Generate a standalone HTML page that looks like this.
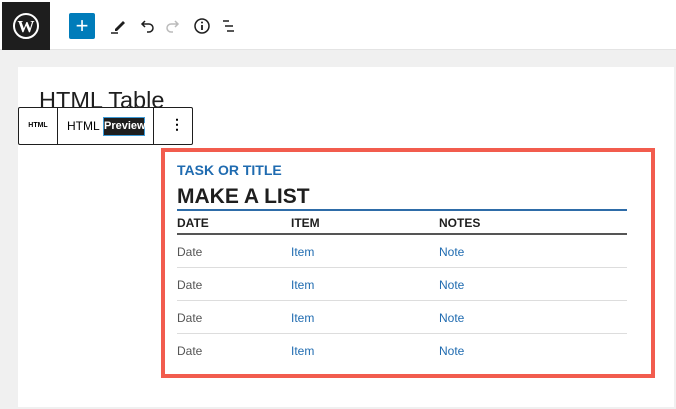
<!DOCTYPE html>
<html><head><style>
*{margin:0;padding:0;box-sizing:border-box}
body{width:676px;height:409px;background:#f0f0f0;font-family:"Liberation Sans",Arial,sans-serif;position:relative;overflow:hidden}
.top{position:absolute;left:0;top:0;width:676px;height:50px;background:#fff;border-bottom:1px solid #e4e4e4}
.wp{position:absolute;left:2px;top:2px;width:48px;height:48px;background:#1e1e1e}
.plus{position:absolute;left:69px;top:13px;width:26px;height:26px;background:#007cba;border-radius:2px;color:#fff;font-size:22px;line-height:25px;text-align:center}
.canvas{position:absolute;left:18px;top:67px;width:656px;height:340px;background:#fff}
.h1{position:absolute;left:39px;top:87px;font-size:23.5px;color:#1e1e1e}
.tb{position:absolute;left:18px;top:107px;width:175px;height:38px;background:#fff;border:1px solid #1e1e1e;border-radius:2px}
.tb div{position:absolute;top:0;height:36px;border-right:1px solid #1e1e1e}
.red{position:absolute;left:161px;top:148px;width:494px;height:230px;border:4px solid #f25c4e;background:#fff}
.t1{position:absolute;left:177px;top:162px;color:#1f6bb0;font-weight:bold;font-size:14px}
.t2{position:absolute;left:177px;top:185px;color:#1e1e1e;font-weight:bold;font-size:21px}
.bl{position:absolute;left:177px;top:209px;width:450px;height:2px;background:#2e6ca8}
.hd{position:absolute;top:216px;font-weight:bold;font-size:12px;color:#1e1e1e}
.dl{position:absolute;left:177px;top:233px;width:450px;height:2px;background:#555}
.r{position:absolute;font-size:12px}
.sep{position:absolute;left:177px;width:450px;height:1px;background:#ddd}
</style></head><body>
<div class="top">
<div class="wp"><svg width="48" height="48" viewBox="0 0 48 48"><circle cx="24" cy="24" r="12" fill="none" stroke="#fff" stroke-width="2"/><text x="24" y="30" fill="#fff" font-family="Liberation Serif" font-weight="bold" font-size="17" text-anchor="middle">W</text></svg></div>
<div class="plus">+</div>
<svg style="position:absolute;left:106px;top:14px" width="24" height="24"><path d="M9 15l8-8 2 2-8 8H9z" fill="#1e1e1e"/><path d="M5 19h7" stroke="#1e1e1e" stroke-width="1.5"/></svg>
<svg style="position:absolute;left:134px;top:14px" width="24" height="24"><path d="M8 10h7a4 4 0 010 8h-2M11 7l-3 3 3 3" fill="none" stroke="#1e1e1e" stroke-width="1.5"/></svg>
<svg style="position:absolute;left:162px;top:14px" width="24" height="24"><path d="M16 10H9a4 4 0 000 8h2M13 7l3 3-3 3" fill="none" stroke="#bbb" stroke-width="1.5"/></svg>
<svg style="position:absolute;left:190px;top:14px" width="24" height="24"><circle cx="12" cy="12" r="7" fill="none" stroke="#1e1e1e" stroke-width="1.5"/><path d="M12 11v5" stroke="#1e1e1e" stroke-width="1.8"/><circle cx="12" cy="8.5" r="1" fill="#1e1e1e"/></svg>
<svg style="position:absolute;left:218px;top:14px" width="24" height="24"><path d="M5 7h6M7 12h8M9 17h7" stroke="#1e1e1e" stroke-width="1.5"/></svg>
</div>
<div class="canvas"></div>
<div class="h1">HTML Table</div>
<div class="tb">
<div style="left:0;width:39px;font-size:7px;font-weight:bold;line-height:36px;text-align:center">HTML</div>
<div style="left:39px;width:96px"><span style="position:absolute;left:9px;top:11px;font-size:12px">HTML</span><span style="position:absolute;left:45px;top:9px;height:19px;width:42px;background:#1e1e1e;color:#fff;font-size:11px;line-height:17px;text-align:center;border:1px solid #3d9ad6;font-weight:bold">Preview</span></div>
<span style="position:absolute;left:151px;top:8px;font-size:14px;font-weight:bold">⋮</span>
</div>
<div class="red"></div>
<div class="t1">TASK OR TITLE</div>
<div class="t2">MAKE A LIST</div>
<div class="bl"></div>
<div class="hd" style="left:177px">DATE</div><div class="hd" style="left:291px">ITEM</div><div class="hd" style="left:439px">NOTES</div>
<div class="dl"></div>
<div class="r" style="left:177px;top:245px;color:#555">Date</div><div class="r" style="left:291px;top:245px;color:#1f6bb0">Item</div><div class="r" style="left:439px;top:245px;color:#1f6bb0">Note</div>
<div class="sep" style="top:267px"></div>
<div class="r" style="left:177px;top:278px;color:#555">Date</div><div class="r" style="left:291px;top:278px;color:#1f6bb0">Item</div><div class="r" style="left:439px;top:278px;color:#1f6bb0">Note</div>
<div class="sep" style="top:300px"></div>
<div class="r" style="left:177px;top:311px;color:#555">Date</div><div class="r" style="left:291px;top:311px;color:#1f6bb0">Item</div><div class="r" style="left:439px;top:311px;color:#1f6bb0">Note</div>
<div class="sep" style="top:333px"></div>
<div class="r" style="left:177px;top:344px;color:#555">Date</div><div class="r" style="left:291px;top:344px;color:#1f6bb0">Item</div><div class="r" style="left:439px;top:344px;color:#1f6bb0">Note</div>
</body></html>
